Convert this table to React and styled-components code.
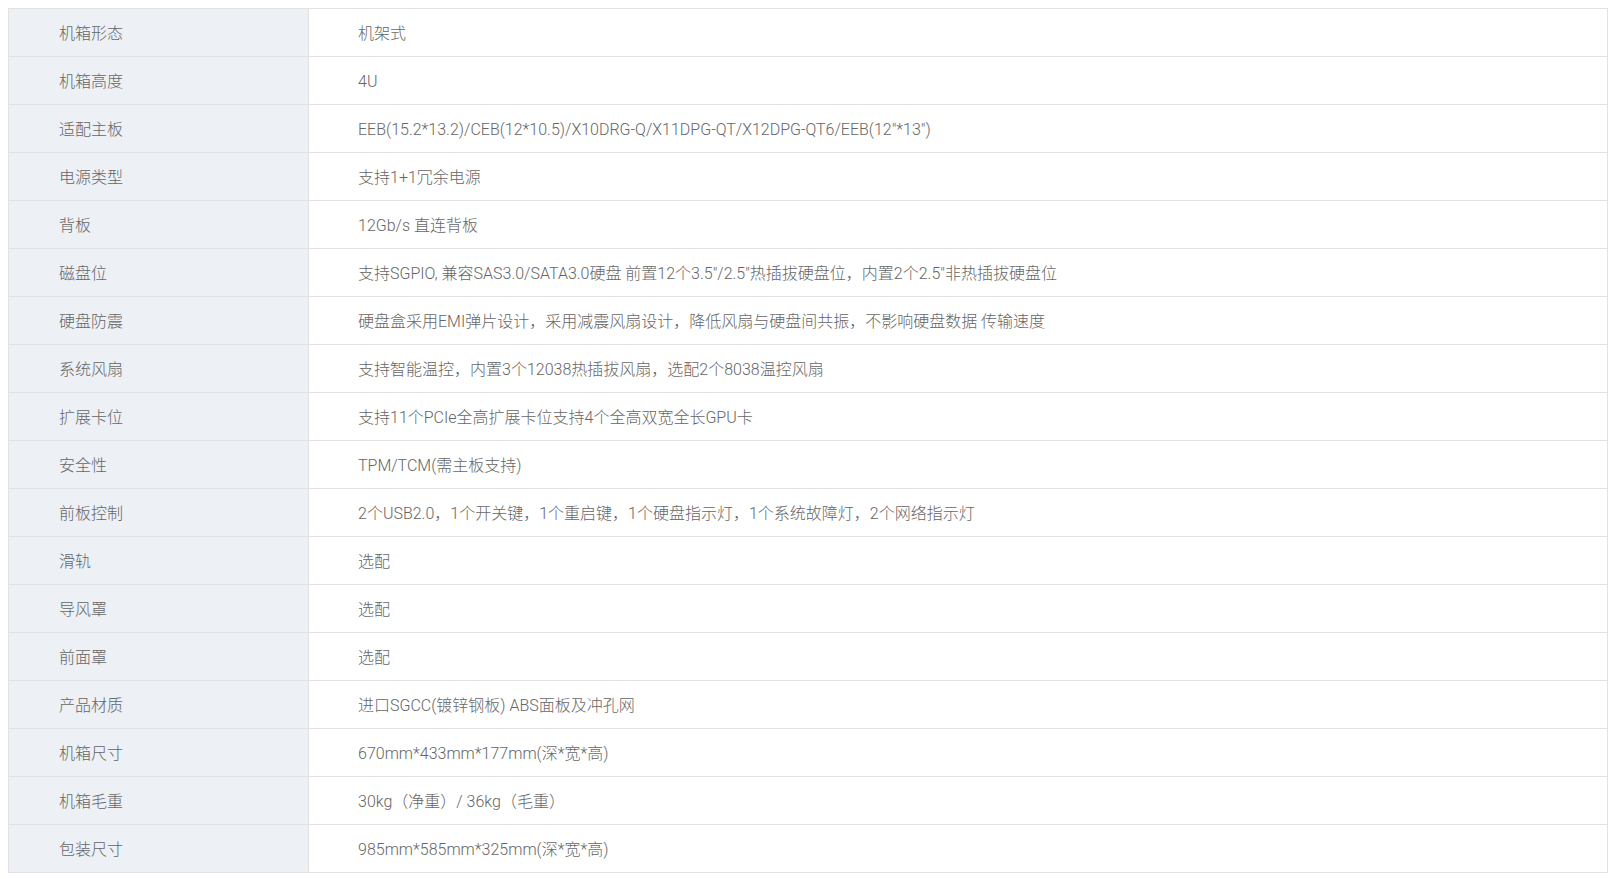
import React from "react";
import styled, { createGlobalStyle } from "styled-components";

const Global = createGlobalStyle`
  html, body { margin: 0; padding: 0; background: #ffffff; }
  body { font-family: Roboto, "Noto Sans CJK SC", sans-serif; }
`;

const Page = styled.div`
  padding: 8px 10px 0 8px;
`;

const Table = styled.table`
  width: 1600px;
  border-collapse: collapse;
  table-layout: fixed;
  border: 1px solid #e2e2e2;
`;

const Cell = styled.td`
  height: 45px;
  border: 1px solid #e2e2e2;
  color: #666666;
  font-size: 16px;
  font-weight: 300;
  line-height: 20px;
  vertical-align: middle;
  white-space: nowrap;
`;

const LabelCell = styled(Cell)`
  width: 249px;
  padding: 0 0 2px 50px;
  background: #edf0f5;
  font-family: "Noto Sans CJK SC", sans-serif;
`;

const ValueCell = styled(Cell)`
  padding: 2px 0 0 49px;
  background: #ffffff;
`;

const rows = [
  ["机箱形态", "机架式"],
  ["机箱高度", "4U"],
  ["适配主板", "EEB(15.2*13.2)/CEB(12*10.5)/X10DRG-Q/X11DPG-QT/X12DPG-QT6/EEB(12\"*13\")"],
  ["电源类型", "支持1+1冗余电源"],
  ["背板", "12Gb/s 直连背板"],
  ["磁盘位", "支持SGPIO, 兼容SAS3.0/SATA3.0硬盘 前置12个3.5″/2.5″热插拔硬盘位，内置2个2.5″非热插拔硬盘位"],
  ["硬盘防震", "硬盘盒采用EMI弹片设计，采用减震风扇设计，降低风扇与硬盘间共振，不影响硬盘数据 传输速度"],
  ["系统风扇", "支持智能温控，内置3个12038热插拔风扇，选配2个8038温控风扇"],
  ["扩展卡位", "支持11个PCIe全高扩展卡位支持4个全高双宽全长GPU卡"],
  ["安全性", "TPM/TCM(需主板支持)"],
  ["前板控制", "2个USB2.0，1个开关键，1个重启键，1个硬盘指示灯，1个系统故障灯，2个网络指示灯"],
  ["滑轨", "选配"],
  ["导风罩", "选配"],
  ["前面罩", "选配"],
  ["产品材质", "进口SGCC(镀锌钢板) ABS面板及冲孔网"],
  ["机箱尺寸", "670mm*433mm*177mm(深*宽*高)"],
  ["机箱毛重", "30kg（净重）/ 36kg（毛重）"],
  ["包装尺寸", "985mm*585mm*325mm(深*宽*高)"],
];

export default function App() {
  return (
    <Page>
      <Global />
      <Table>
        <tbody>
          {rows.map(([k, v]) => (
            <tr key={k}>
              <LabelCell>{k}</LabelCell>
              <ValueCell>{v}</ValueCell>
            </tr>
          ))}
        </tbody>
      </Table>
    </Page>
  );
}
